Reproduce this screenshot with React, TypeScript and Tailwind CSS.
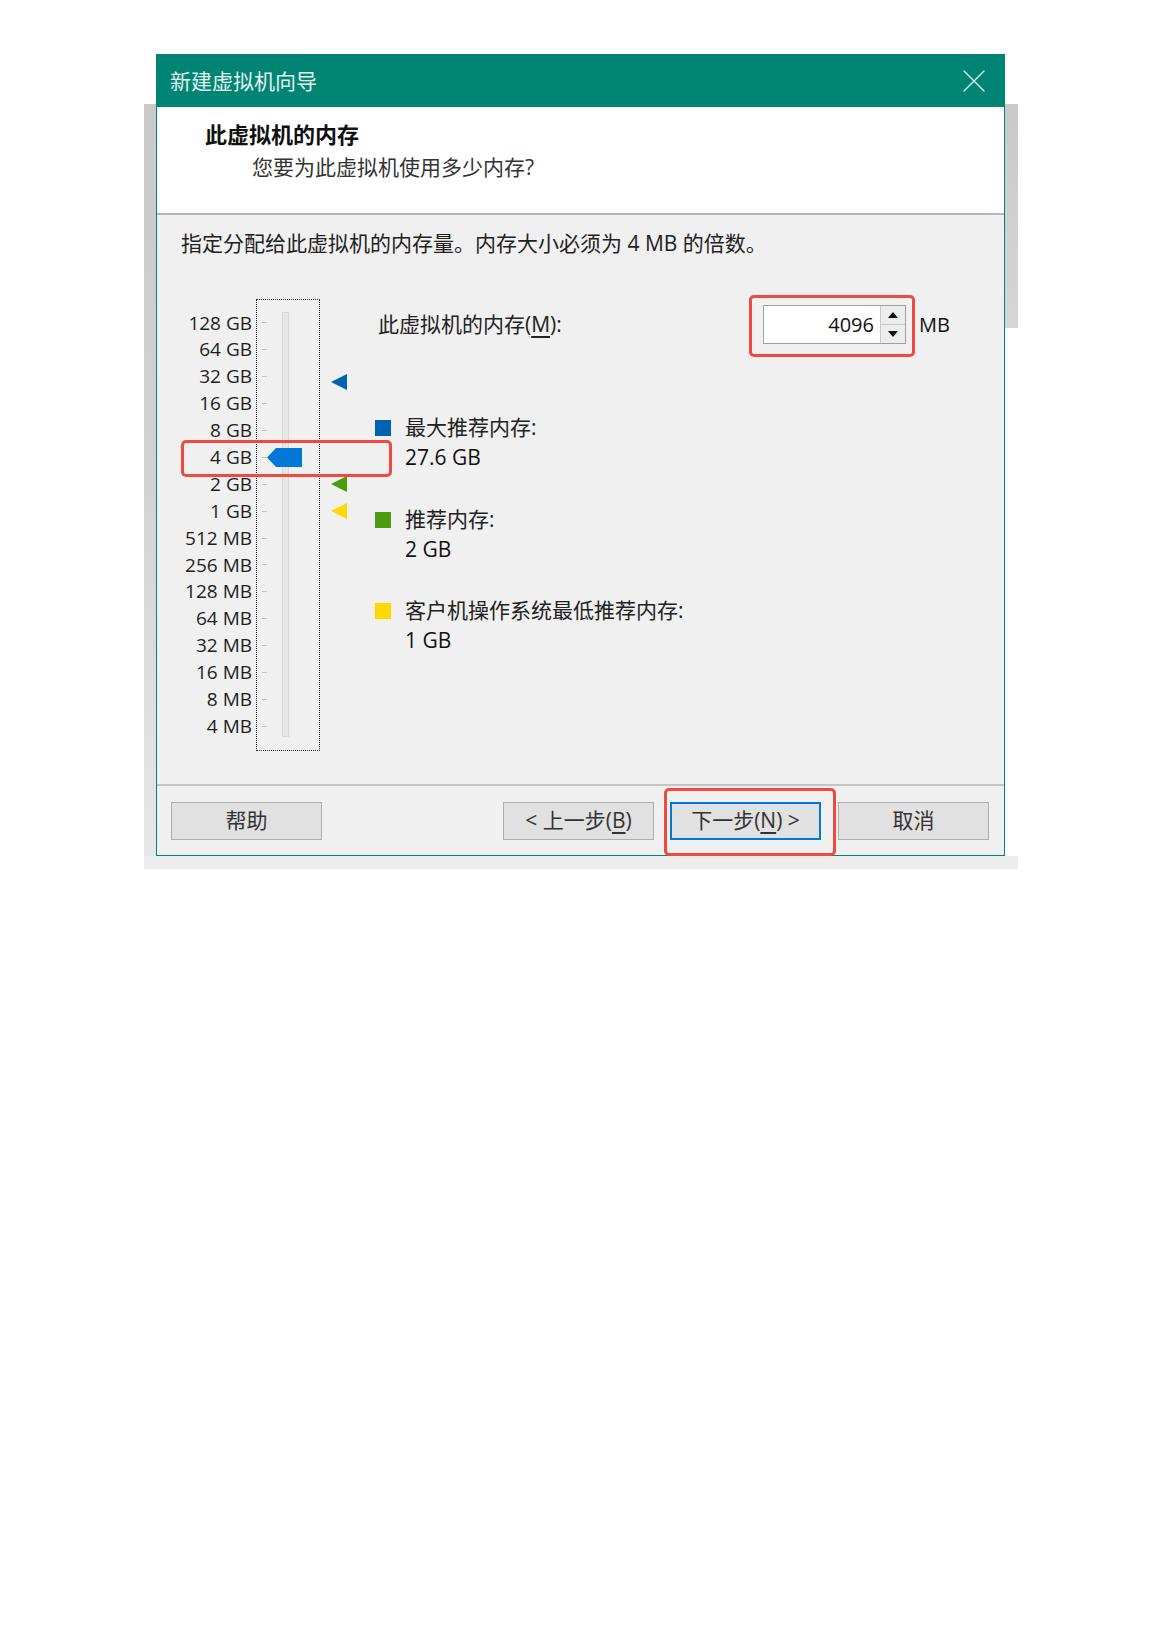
import { X } from 'lucide-react';

const ROW = 26.9;
const LABELS = ['128 GB', '64 GB', '32 GB', '16 GB', '8 GB', '4 GB', '2 GB', '1 GB', '512 MB', '256 MB', '128 MB', '64 MB', '32 MB', '16 MB', '8 MB', '4 MB'];

// centre of a value on the slider, measured from the top of the dotted box
const rowCenter = (mb: number) => 10.5 + Math.log2(131072 / mb) * ROW + ROW / 2;

const MARKERS = [
  { mb: 28262, color: '#0063b1' },
  { mb: 2048, color: '#4c9a0e' },
  { mb: 1024, color: '#ffd800' },
];

const INFO = [
  { color: 'bg-[#0063b1]', label: '最大推荐内存:', value: '27.6 GB', mt: 'mt-[68px]' },
  { color: 'bg-[#4c9a0e]', label: '推荐内存:', value: '2 GB', mt: 'mt-[32px]' },
  { color: 'bg-[#ffd800]', label: '客户机操作系统最低推荐内存:', value: '1 GB', mt: 'mt-[31px]' },
];

function Button({ children, primary }: { children: React.ReactNode; primary?: boolean }) {
  return (
    <button
      className={`h-[38px] w-[151px] bg-[#e1e1e1] text-[21px] text-[#333] flex items-center justify-center ${
        primary ? 'border-2 border-[#0078d7]' : 'border border-[#adadad]'
      }`}
    >
      {children}
    </button>
  );
}

export default function App() {
  const memory = 4096;

  return (
    <div className="relative w-[1159px] h-[1639px] bg-white pt-[54px] pl-[156px] font-['Open_Sans','Noto_Sans_CJK_SC',sans-serif] text-[#222]">
      {/* window behind the dialog */}
      <div className="absolute left-[144px] top-[104px] w-[12px] h-[765px] bg-gradient-to-b from-[#c9c9c9] via-[#d3d3d3] to-[#e8e8e8]" />
      <div className="absolute left-[1005px] top-[104px] w-[13px] h-[224px] bg-gradient-to-b from-[#c9c9c9] to-[#d6d6d6]" />
      <div className="absolute left-[144px] top-[856px] w-[874px] h-[13px] bg-[#ededed]" />

      <div className="relative w-[849px] h-[802px] border border-[#008575] flex flex-col">
        {/* Title bar */}
        <div className="h-[52px] bg-[#008575] flex items-center justify-between pl-[13px] pr-[10px]">
          <span className="text-[21px] text-[#e4f0ed] font-['Noto_Sans_CJK_SC',sans-serif]">新建虚拟机向导</span>
          <X className="w-[40px] h-[40px] text-[#d9ebe7]" strokeWidth={0.8} />
        </div>

        {/* Header */}
        <div className="h-[106px] bg-white pl-[48px] pt-[13px]">
          <p className="text-[22px] leading-[28px] font-bold text-[#111]">此虚拟机的内存</p>
          <p className="mt-[5px] pl-[47px] text-[21px] leading-[28px] text-[#333]">您要为此虚拟机使用多少内存?</p>
        </div>
        <div className="h-[2px] bg-[#b6b6b6]" />

        {/* Body */}
        <div className="flex-1 bg-[#f0f0f0] flex flex-col">
          <p className="pt-[14px] pl-[24px] text-[21px] leading-[28px]">
            指定分配给此虚拟机的内存量。内存大小必须为 4 MB 的倍数。
          </p>

          <div className="mt-[42px] pl-[15px] flex">
            {/* scale labels */}
            <div className="w-[80px] pt-[10.5px] flex flex-col items-end">
              {LABELS.map(l => (
                <div key={l} className="h-[26.9px] leading-[26.9px] text-[19px] text-[#1e1e1e] whitespace-nowrap">{l}</div>
              ))}
            </div>

            {/* slider */}
            <div className="relative ml-[4px] w-[64px] h-[452px] border border-dotted border-[#222] flex">
              <div className="pl-[5px] pt-[9.5px] flex flex-col">
                {LABELS.map(l => (
                  <div key={l} className="h-[26.9px] flex items-center">
                    <div className="w-[5px] h-[1px] bg-[#c4c4c4]" />
                  </div>
                ))}
              </div>
              <div className="ml-[15px] mt-[12px] w-[7px] h-[425px] bg-[#e7e7e7] border border-[#d8d8d8]" />
              <svg
                className="absolute left-[10px]"
                style={{ top: rowCenter(memory) - 1 - 9.5 }}
                width="35"
                height="19"
                viewBox="0 0 35 19"
              >
                <polygon points="0,9.5 9,0 35,0 35,19 9,19" fill="#0078d7" />
              </svg>
            </div>

            {/* recommendation markers */}
            <div className="relative w-[55px]">
              {MARKERS.map(m => (
                <svg
                  key={m.mb}
                  className="absolute left-[11px]"
                  style={{ top: rowCenter(m.mb) - 8 }}
                  width="16"
                  height="16"
                  viewBox="0 0 16 16"
                >
                  <polygon points="0,8 16,0 16,16" fill={m.color} />
                </svg>
              ))}
            </div>

            {/* memory input + info */}
            <div className="flex flex-col">
              <div className="mt-[6px] h-[39px] flex items-center">
                <label className="w-[388px] pl-[3px] text-[21px]">
                  此虚拟机的内存(<span className="underline underline-offset-4">M</span>):
                </label>
                <div className="w-[143px] h-[39px] bg-white border border-[#a0a0a0] flex">
                  <div className="flex-1 flex items-center justify-end pr-[6px] text-[20px] font-medium text-[#111]">{memory}</div>
                  <div className="w-[25px] flex flex-col border-l border-[#c8c8c8]">
                    <div className="flex-1 bg-[#ececec] border-b border-[#c8c8c8] flex items-center justify-center">
                      <svg width="10" height="6" viewBox="0 0 10 6"><polygon points="5,0 10,6 0,6" fill="#111" /></svg>
                    </div>
                    <div className="flex-1 bg-[#ececec] flex items-center justify-center">
                      <svg width="10" height="6" viewBox="0 0 10 6"><polygon points="0,0 10,0 5,6" fill="#111" /></svg>
                    </div>
                  </div>
                </div>
                <span className="ml-[13px] text-[20px] font-medium text-[#111]">MB</span>
              </div>

              {INFO.map(i => (
                <div key={i.label} className={`${i.mt} flex items-start`}>
                  <div className={`mt-[8px] w-[16px] h-[16px] ${i.color}`} />
                  <div className="ml-[14px]">
                    <p className="text-[21px] leading-[30px]">{i.label}</p>
                    <p className="text-[21px] leading-[30px] font-medium text-[#111]">{i.value}</p>
                  </div>
                </div>
              ))}
            </div>
          </div>
        </div>

        <div className="h-[2px] bg-[#c4c4c4]" />

        {/* Buttons */}
        <div className="h-[69px] bg-[#f0f0f0] flex pt-[16px] pl-[14px] pr-[15px]">
          <Button>帮助</Button>
          <div className="flex-1" />
          <Button>&lt; 上一步(<span className="underline underline-offset-4">B</span>)</Button>
          <div className="w-[16px]" />
          <Button primary>下一步(<span className="underline underline-offset-4">N</span>) &gt;</Button>
          <div className="w-[17px]" />
          <Button>取消</Button>
        </div>
      </div>

      {/* red annotation boxes */}
      <div className="absolute left-[181px] top-[440px] w-[211px] h-[37px] border-[3px] border-[#ee4a40] rounded-[5px]" />
      <div className="absolute left-[749px] top-[295px] w-[166px] h-[62px] border-[3px] border-[#ee4a40] rounded-[5px]" />
      <div className="absolute left-[664px] top-[788px] w-[172px] h-[68px] border-[3px] border-[#ee4a40] rounded-[5px]" />
    </div>
  );
}
